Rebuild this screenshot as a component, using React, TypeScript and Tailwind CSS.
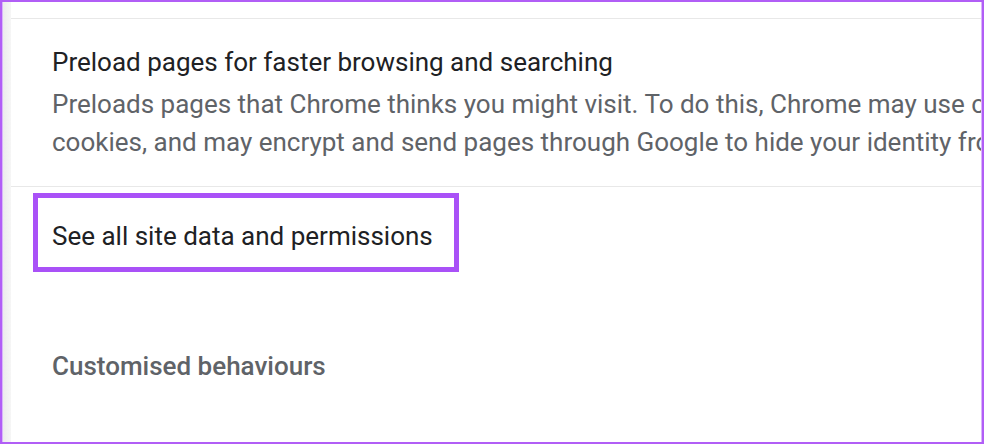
export default function App() {
  return (
    <div
      className="h-[446px] w-[984px] overflow-hidden bg-white"
      style={{ fontFamily: "Roboto, 'Liberation Sans', sans-serif" }}
    >
      <div className="flex h-[444px] w-[984px] border-2 border-[#b15ef6]">
        {/* left gutter */}
        <div className="w-[9px] shrink-0 border-l border-[#d9b4fb] bg-gradient-to-r from-[#ececec] to-[#f6f6f6]" />

        {/* settings content */}
        <div className="min-w-0 flex-1 overflow-hidden border-r border-[#d9b4fb] bg-white">
          <div className="h-[16px]" />
          <div className="border-t border-[#e8e8e8]" />

          {/* Preload row */}
          <div className="pl-[41px] pt-[27px] pb-[25px] whitespace-nowrap">
            <div className="text-[26px] leading-[32px] text-[#202124]">
              Preload pages for faster browsing and searching
            </div>
            <div className="mt-[7px] text-[26px] leading-[38px] text-[#5f6368]">
              <div>
                Preloads pages that Chrome thinks you might visit. To do this, Chrome may use cookies, if you allow
              </div>
              <div>
                cookies, and may encrypt and send pages through Google to hide your identity from sites.
              </div>
            </div>
          </div>
          <div className="border-t border-[#e8e8e8]" />

          {/* highlighted row */}
          <div className="ml-[22px] mt-[6px] flex h-[79px] w-[426px] items-center border-[5px] border-[#a951f7] pl-[14px] pt-[6px]">
            <span className="text-[26px] leading-[32px] text-[#202124] whitespace-nowrap">
              See all site data and permissions
            </span>
          </div>

          {/* section header */}
          <div className="ml-[41px] mt-[78px] text-[26px] font-medium leading-[32px] text-[#5f6368]">
            Customised behaviours
          </div>
        </div>
      </div>
    </div>
  );
}
